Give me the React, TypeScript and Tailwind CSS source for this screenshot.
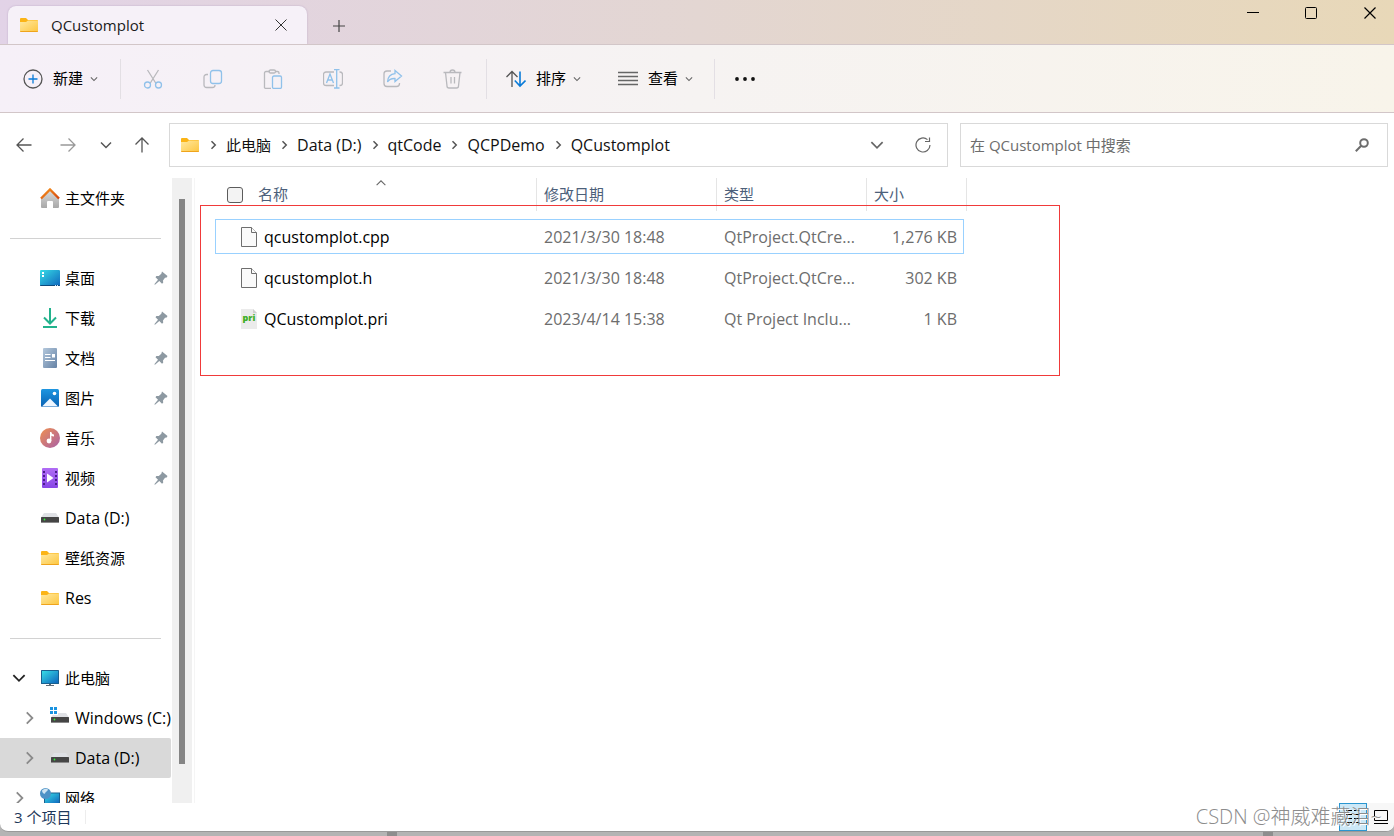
import { ReactNode } from "react";
import clsx from "clsx";

const UI_FONT = "font-['Open_Sans','Noto_Sans_CJK_SC',sans-serif]";

type Dir = "left" | "right" | "up" | "down";

const CHEVRON_PATHS: Record<Dir, string> = {
  left: "M10 3 5 8l5 5",
  right: "M6 3l5 5-5 5",
  up: "M3 10.5 8 5.5l5 5",
  down: "M3 5.5l5 5 5-5",
};

const Chevron = (props: { dir: Dir; className?: string; width?: number }) => (
  <svg
    viewBox="0 0 16 16"
    className={clsx("shrink-0", props.className)}
    fill="none"
    stroke="currentColor"
    strokeWidth={props.width || 1.5}>
    <path d={CHEVRON_PATHS[props.dir]} />
  </svg>
);

const Folder = () => (
  <svg viewBox="0 0 20 20" className="size-5 shrink-0">
    <defs>
      <linearGradient id="folder" x1="0" y1="0" x2="1" y2="1">
        <stop offset="0" stopColor="#ffe9a0" />
        <stop offset="1" stopColor="#fdc640" />
      </linearGradient>
    </defs>
    <path d="M1 4a1 1 0 0 1 1-1h5l2 2h9a1 1 0 0 1 1 1v3H1z" fill="#fbb416" />
    <path d="M1 7h6l2-1.5h10V16a1 1 0 0 1-1 1H2a1 1 0 0 1-1-1z" fill="url(#folder)" />
    <path d="M1 16h18a1 1 0 0 1-1 1H2a1 1 0 0 1-1-1z" fill="#efa41c" />
  </svg>
);

const Home = () => (
  <svg viewBox="0 0 20 20" className="size-5 shrink-0">
    <defs>
      <linearGradient id="home" x1="0" y1="0" x2="0" y2="1">
        <stop offset="0" stopColor="#dcdcdc" />
        <stop offset="1" stopColor="#a8a8a8" />
      </linearGradient>
      <linearGradient id="roof" x1="0" y1="0" x2="1" y2="1">
        <stop offset="0" stopColor="#f8961e" />
        <stop offset="1" stopColor="#d4430c" />
      </linearGradient>
    </defs>
    <path d="M10 2 1 10v9a1 1 0 0 0 1 1h5v-6a1 1 0 0 1 1-1h4a1 1 0 0 1 1 1v6h5a1 1 0 0 0 1-1v-9z" fill="url(#home)" />
    <path d="M1 10.5 10 1.5l9 9" fill="none" stroke="url(#roof)" strokeWidth="2.4" />
  </svg>
);

const Desktop = () => (
  <svg viewBox="0 0 20 20" className="size-5 shrink-0">
    <defs>
      <linearGradient id="screen" x1="0" y1="0" x2="1" y2="1">
        <stop offset="0" stopColor="#36dce6" />
        <stop offset="1" stopColor="#0f66bd" />
      </linearGradient>
    </defs>
    <rect x="0" y="2" width="20" height="16" rx="1" fill="url(#screen)" />
    <path d="M0 17h20a1 1 0 0 1-1 1H1a1 1 0 0 1-1-1z" fill="#0c4a7c" />
    <path d="M2 4h2v2H2zM2 7h2v2H2z" fill="#fff" />
    <path d="M15 17.5h1M17 17.5h1" stroke="#cfe6ff" strokeWidth="1" />
  </svg>
);

const Download = () => (
  <svg viewBox="0 0 20 20" className="size-5 shrink-0" fill="none" stroke="#22b28c" strokeWidth="2">
    <path d="M10 0v15M4 9.5l6 6 6-6M3 19h14" />
  </svg>
);

const Documents = () => (
  <svg viewBox="0 0 20 20" className="size-5 shrink-0">
    <defs>
      <linearGradient id="doc" x1="0" y1="0" x2="1" y2="1">
        <stop offset="0" stopColor="#b4c8dc" />
        <stop offset="1" stopColor="#6582a5" />
      </linearGradient>
    </defs>
    <rect x="3" y="0" width="14" height="20" rx="1" fill="url(#doc)" />
    <path d="M5 6.5h5.500M5 9.500h5.500M5 12.500h10" stroke="#fff" strokeWidth="1.2" />
    <path d="M12 6h3v3.500h-3z" fill="#fff" />
  </svg>
);

const Pictures = () => (
  <svg viewBox="0 0 20 20" className="size-5 shrink-0">
    <defs>
      <linearGradient id="pic" x1="0" y1="0" x2="0" y2="1">
        <stop offset="0" stopColor="#1e96e0" />
        <stop offset="1" stopColor="#0961b3" />
      </linearGradient>
    </defs>
    <rect x="1" y="1" width="18" height="18" rx="1.5" fill="url(#pic)" />
    <path d="M2 18.5 10 10.500l8 8z" fill="#eef6ff" />
    <circle cx="14.5" cy="5.5" r="1.8" fill="#fff" />
  </svg>
);

const Music = () => (
  <svg viewBox="0 0 20 20" className="size-5 shrink-0">
    <defs>
      <linearGradient id="music" x1="0" y1="0" x2="1" y2="1">
        <stop offset="0" stopColor="#f0904f" />
        <stop offset="1" stopColor="#a860a8" />
      </linearGradient>
    </defs>
    <circle cx="10" cy="10" r="10" fill="url(#music)" />
    <circle cx="9" cy="13" r="2.4" fill="#fff" />
    <path d="M10 4h1.400c.2 1.500 1 2.200 2.600 2.500v2c-1.200 0-2-.3-2.600-.8V13H10z" fill="#fff" />
  </svg>
);

const Videos = () => (
  <svg viewBox="0 0 20 20" className="size-5 shrink-0">
    <defs>
      <linearGradient id="video" x1="0" y1="0" x2="0" y2="1">
        <stop offset="0" stopColor="#b06cf5" />
        <stop offset="1" stopColor="#8746e6" />
      </linearGradient>
    </defs>
    <rect x="2" y="0" width="16" height="20" rx="1" fill="url(#video)" />
    <path
      d="M3 3h2v2H3zM3 7h2v2H3zM3 11h2v2H3zM3 15h2v2H3zM15 3h2v2h-2zM15 7h2v2h-2zM15 11h2v2h-2zM15 15h2v2h-2z"
      fill="#4b1d8c"
    />
    <path d="M7 5.5v9l6.500-4.500z" fill="#fff" />
  </svg>
);

const Drive = (props: { system?: boolean }) => (
  <svg viewBox="0 0 20 20" className="size-5 shrink-0 overflow-visible">
    <path d="M4 5h12l3 4.500H1z" fill="#dfe1e5" />
    <rect x="1" y="9" width="18" height="6" rx=".5" fill="#454545" />
    <path d="M1 14h18v1H1z" fill="#8a8a8a" />
    <circle cx="4.500" cy="11.500" r=".9" fill="#35f03c" />
    {props.system && (
      <>
        <path d="M0-1h8v8H0z" fill="#fff" />
        <path d="M0-1h3v3H0zM4-1h3v3H4zM0 3h3v3H0zM4 3h3v3H4z" fill="#1a93e0" />
      </>
    )}
  </svg>
);

const Computer = () => (
  <svg viewBox="0 0 20 20" className="size-5 shrink-0">
    <rect x="1" y="2" width="18" height="14" rx=".5" fill="#19608f" />
    <rect x="2" y="3" width="16" height="12" fill="url(#screen)" />
    <path d="M9 16h2v1.500H9zM6 17h8v1H6z" fill="#5e6a75" />
  </svg>
);

const Network = () => (
  <svg viewBox="0 0 20 20" className="size-5 shrink-0">
    <rect x="4" y="4.500" width="16" height="12" fill="#19608f" />
    <rect x="5" y="5.500" width="14" height="10" fill="url(#screen)" />
    <circle cx="5.500" cy="5.500" r="5.500" fill="#4d92c6" />
    <path d="M2 2.500c2-2 5-2 6-1-.5 2-2.500 2-3 4-1 1-3-1-3-3z" fill="#cfe4f2" />
  </svg>
);

const Pin = () => (
  <svg viewBox="0 0 14 14" className="size-3.5 shrink-0" fill="#8d99a2">
    <path d="M8 .5 13.500 5l-.8 1.500-1.700.3-2 2.700.2 2.200-1.200 1L5.300 10 1 13.800l-.7-.6L4 8.700 1.500 6.200l.9-1.200 2.400.1 2.500-2.300z" />
  </svg>
);

const Page = () => (
  <svg viewBox="0 0 16 20" className="h-5 w-4 shrink-0" fill="#fafafa" stroke="#6e6e6e">
    <path d="M.5.5h10l5 5v14H.5z" />
    <path d="M10.500.5v5h5" />
  </svg>
);

const PriPage = () => (
  <svg viewBox="0 0 16 20" className="h-5 w-4 shrink-0">
    <path d="M0 0h12l4 4v16H0z" fill="#ebebeb" />
    <path d="M12 0v4h4z" fill="#cfcfcf" />
    <text x="8" y="12" textAnchor="middle" fontSize="9" fontWeight="800" fontFamily="Open Sans, sans-serif" fill="#3cae22">
      pri
    </text>
  </svg>
);

// toolbar glyphs, drawn on a 20px grid
const TOOLS: { label: string; icon: ReactNode }[] = [
  {
    label: "剪切",
    icon: (
      <>
        <path d="M4.500 1 13 14.500M15.500 1 7 14.500" stroke="#b9b9bd" />
        <circle cx="4.500" cy="16" r="3" stroke="#90c1ea" />
        <circle cx="15.500" cy="16" r="3" stroke="#90c1ea" />
      </>
    ),
  },
  {
    label: "复制",
    icon: (
      <>
        <path d="M5 5.500H3.500a2.500 2.500 0 0 0-2.500 2.500v8A2.500 2.500 0 0 0 3.500 18.500h6a2.500 2.500 0 0 0 2.500-2.500" stroke="#b9b9bd" />
        <rect x="7.500" y="1.500" width="11" height="13" rx="2.500" stroke="#90c1ea" />
      </>
    ),
  },
  {
    label: "粘贴",
    icon: (
      <>
        <path d="M7 2.500H3A1.500 1.500 0 0 0 1.500 4v13.500A1.500 1.500 0 0 0 3 19.500h5M12 2.500h2.500A1.500 1.500 0 0 1 16 4v1" stroke="#b9b9bd" />
        <rect x="6" y="1" width="6.500" height="3" rx="1.500" stroke="#b9b9bd" />
        <rect x="9.500" y="7" width="9" height="12.500" rx="1.500" stroke="#90c1ea" />
      </>
    ),
  },
  {
    label: "重命名",
    icon: (
      <>
        <path d="M11 3H3a2.500 2.500 0 0 0-2.500 2.500v8.500A2.500 2.500 0 0 0 3 16.500h8M16.500 3H17a2.500 2.500 0 0 1 2.500 2.500v8.500a2.500 2.500 0 0 1-2.500 2.500h-.5" stroke="#b9b9bd" />
        <path d="m3.500 14 3.500-9 3.500 9M4.500 11h5M11 .5h5.500M11 19h5.500M13.700.5V19" stroke="#90c1ea" />
      </>
    ),
  },
  {
    label: "共享",
    icon: (
      <>
        <path d="M8 2H4a3 3 0 0 0-3 3v9.500a3 3 0 0 0 3 3h9.500a3 3 0 0 0 3-3V14" stroke="#b9b9bd" />
        <path d="M12 1.500 18.500 7 12 12.500V9.500C8.500 9.300 6 10.500 4.500 13 4.800 8.500 7.500 5 12 4.700z" stroke="#90c1ea" />
      </>
    ),
  },
  {
    label: "删除",
    icon: (
      <path
        d="M.5 3.500h18M7 3.500a2.500 2.500 0 0 1 5 0M2.500 3.500 4 17a2 2 0 0 0 2 2h7.500a2 2 0 0 0 2-2l1.500-13.500M8 8v6.500M11.500 8v6.500"
        stroke="#b9b9bd"
      />
    ),
  },
];

const TitleBar = () => (
  <header className="flex h-11 shrink-0 bg-linear-to-r from-[#e2d3e7] via-[#e3d6d2] to-[#e8d8b8]">
    <div className="ml-2 mt-1.5 flex w-[299px] items-center rounded-t-lg bg-[#f6f1f8] pl-[11px] pr-5 shadow-[0_0_2px_#bba8c4]">
      <Folder />
      <h1 className="ml-3 grow text-[15px] font-medium text-[#1b1b1b]">QCustomplot</h1>
      <button aria-label="关闭标签页">
        <svg viewBox="0 0 12 12" className="size-3" stroke="#333" fill="none">
          <path d="m.5.5 11 11M11.500.5l-11 11" />
        </svg>
      </button>
    </div>
    <button aria-label="新标签页" className="flex w-16 items-center justify-center pt-2">
      <svg viewBox="0 0 12 12" className="size-3" stroke="#444" strokeWidth="1.2" fill="none">
        <path d="M6 0v12M0 6h12" />
      </svg>
    </button>
    <div className="ml-auto flex h-[26px]">
      <button aria-label="最小化" className="flex w-[58px] items-center justify-center">
        <svg viewBox="0 0 12 12" className="size-3" stroke="#000" fill="none">
          <path d="M0 5.500h12" />
        </svg>
      </button>
      <button aria-label="最大化" className="flex w-[58px] items-center justify-center">
        <svg viewBox="0 0 12 12" className="size-3" stroke="#000" fill="none">
          <rect x=".5" y=".5" width="11" height="11" rx="1" />
        </svg>
      </button>
      <button aria-label="关闭" className="flex w-[54px] items-center justify-center pl-1.5">
        <svg viewBox="0 0 12 12" className="size-3" stroke="#000" strokeWidth="1.2" fill="none">
          <path d="m.5.5 11 11M11.500.5l-11 11" />
        </svg>
      </button>
    </div>
  </header>
);

const Separator = () => <span className="h-10 w-px bg-[#e3dfe4]" />;

const MenuButton = (props: { icon: ReactNode; text: string; className?: string }) => (
  <button className={clsx("flex items-center text-[15px] text-black", props.className)}>
    <svg viewBox="0 0 20 20" className="mr-2.5 size-5 shrink-0" fill="none" strokeWidth="1.3">
      {props.icon}
    </svg>
    {props.text}
    <Chevron dir="down" className="ml-1.5 size-2.5 text-[#666]" width={1.8} />
  </button>
);

const Toolbar = () => (
  <div className="flex h-[69px] shrink-0 items-center border-y border-[#d2c6c8] bg-linear-to-r from-[#f6f0f8] via-[#f6f3f2] to-[#f8f4ea]">
    <MenuButton
      className="w-[120px] pl-[23px]"
      text="新建"
      icon={
        <>
          <circle cx="10" cy="10" r="9" stroke="#555" />
          <path d="M10 5.500v9M5.500 10h9" stroke="#0a7bd8" />
        </>
      }
    />
    <Separator />
    <div className="flex pl-0.5 pr-[3px]">
      {TOOLS.map((tool) => (
        <button key={tool.label} aria-label={tool.label} disabled className="flex w-15 justify-center">
          <svg viewBox="0 0 20 20" className="size-5" fill="none" strokeWidth="1.3">
            {tool.icon}
          </svg>
        </button>
      ))}
    </div>
    <Separator />
    <MenuButton
      className="w-28 pl-[19px]"
      text="排序"
      icon={
        <>
          <path d="M6 18V2.500M.5 8 6 2.500 11.500 8" stroke="#555" />
          <path d="M14 2.500V17M8.800 11.500 14 17l5.500-5.500" stroke="#0a7bd8" strokeWidth="1.6" />
        </>
      }
    />
    <MenuButton
      className="w-[115px] pl-[19px]"
      text="查看"
      icon={<path d="M0 3.500h20M0 7.500h20M0 11.500h20M0 15.500h20" stroke="#666" />}
    />
    <Separator />
    <button aria-label="更多" className="flex w-[60px] justify-center">
      <svg viewBox="0 0 20 20" className="size-5" fill="#111">
        <circle cx="2" cy="10" r="1.9" />
        <circle cx="10" cy="10" r="1.9" />
        <circle cx="18" cy="10" r="1.9" />
      </svg>
    </button>
  </div>
);

const CRUMBS = ["此电脑", "Data (D:)", "qtCode", "QCPDemo", "QCustomplot"];

// latin labels are set one pixel larger than chinese ones
const textSize = (text: string) => (/^[\x20-\x7e]+$/.test(text) ? "text-base" : "text-[15px]");

const ARROWS = {
  back: "M15.500 8H1M7.500 1.500 1 8l6.500 6.500",
  forward: "M.5 8H15M8.500 1.500 15 8l-6.500 6.500",
  up: "M8 15.500V1M1.500 7.500 8 1l6.500 6.500",
};

const Arrow = (props: { d: string }) => (
  <svg viewBox="0 0 16 16" className="size-4" fill="none" stroke="currentColor" strokeWidth="1.3">
    <path d={props.d} />
  </svg>
);

const NavRow = () => (
  <div className="flex shrink-0 items-center pt-2.5 pb-[11px] pr-1.5">
    <button aria-label="后退" className="flex w-12 justify-center text-[#555]">
      <Arrow d={ARROWS.back} />
    </button>
    <button aria-label="前进" className="flex w-10 justify-center text-[#999]">
      <Arrow d={ARROWS.forward} />
    </button>
    <button aria-label="最近浏览的位置" className="flex w-9 justify-center text-[#555]">
      <Chevron dir="down" className="size-4" />
    </button>
    <button aria-label="上移" className="flex w-9 justify-center text-[#555]">
      <Arrow d={ARROWS.up} />
    </button>
    <nav className="ml-[9px] flex h-11 grow items-center border border-[#d9d9d9] pl-2.5">
      <Folder />
      {CRUMBS.map((crumb) => (
        <div key={crumb} className="flex items-center">
          <span className="flex w-[26px] justify-center text-[#555]">
            <Chevron dir="right" className="size-3" width={2} />
          </span>
          <a href="#" className={clsx("text-[#111]", textSize(crumb))}>
            {crumb}
          </a>
        </div>
      ))}
      <button aria-label="以前的位置" className="ml-auto flex w-11 justify-center text-[#666]">
        <Chevron dir="down" className="size-[18px]" />
      </button>
      <button aria-label="刷新" className="flex w-12 justify-center">
        <svg viewBox="0 0 16 16" className="size-4" fill="none" stroke="#666" strokeWidth="1.2">
          <path d="M15 8A7 7 0 1 1 12.500 2.600M10 4.500h4.500V.5" />
        </svg>
      </button>
    </nav>
    <label className="ml-3 flex h-11 w-[428px] items-center border border-[#d9d9d9] pl-[9px] pr-[18px]">
      <input
        type="search"
        aria-label="搜索"
        placeholder="在 QCustomplot 中搜索"
        className="w-0 grow text-[15px] outline-none placeholder:text-[#6d6d6d]"
      />
      <svg viewBox="0 0 14 14" className="size-3.5" fill="none" stroke="#6d6d6d" strokeWidth="2">
        <circle cx="9" cy="5" r="3.8" />
        <path d="M6.200 7.800.8 13.200" />
      </svg>
    </label>
  </div>
);

const QUICK: { icon: ReactNode; text: string; pinned?: boolean }[] = [
  { icon: <Desktop />, text: "桌面", pinned: true },
  { icon: <Download />, text: "下载", pinned: true },
  { icon: <Documents />, text: "文档", pinned: true },
  { icon: <Pictures />, text: "图片", pinned: true },
  { icon: <Music />, text: "音乐", pinned: true },
  { icon: <Videos />, text: "视频", pinned: true },
  { icon: <Drive />, text: "Data (D:)" },
  { icon: <Folder />, text: "壁纸资源" },
  { icon: <Folder />, text: "Res" },
];

const SideItem = (props: {
  icon: ReactNode;
  text: string;
  pinned?: boolean;
  expand?: Dir;
  nested?: boolean;
  active?: boolean;
}) => (
  <a
    href="#"
    className={clsx(
      "flex h-10 shrink-0 items-center whitespace-nowrap text-black",
      textSize(props.text),
      props.nested ? "pl-5" : "pl-2.5",
      props.active && "rounded-r-xs bg-[#d9d9d9]",
    )}>
    <span className={clsx("flex w-[30px] shrink-0", props.expand === "down" ? "text-[#222]" : "text-[#8a8a8a]")}>
      {props.expand && <Chevron dir={props.expand} className="size-[18px]" width={1.6} />}
    </span>
    {props.icon}
    <span className="ml-[5px] grow">{props.text}</span>
    {props.pinned && (
      <span className="pr-[3px]">
        <Pin />
      </span>
    )}
  </a>
);

const Divider = () => (
  <div className="flex h-10 shrink-0 items-center px-2.5">
    <hr className="grow border-[#d2d2d2]" />
  </div>
);

const Sidebar = () => (
  <aside className="flex w-48 shrink-0">
    <nav className="flex w-[171px] flex-col overflow-hidden">
      <SideItem icon={<Home />} text="主文件夹" />
      <Divider />
      {QUICK.map((val) => (
        <SideItem key={val.text} {...val} />
      ))}
      <Divider />
      <SideItem icon={<Computer />} text="此电脑" expand="down" />
      <SideItem icon={<Drive system />} text="Windows (C:)" expand="right" nested />
      <SideItem icon={<Drive />} text="Data (D:)" expand="right" nested active />
      <SideItem icon={<Network />} text="网络" expand="right" />
    </nav>
    <div className="ml-px flex w-5 justify-center bg-[#f0f0f0] pb-[39px] pt-[21px]">
      <div className="w-1.5 bg-[#858585]" />
    </div>
  </aside>
);

const FILES = [
  { icon: <Page />, name: "qcustomplot.cpp", date: "2021/3/30 18:48", type: "QtProject.QtCre...", size: "1,276 KB" },
  { icon: <Page />, name: "qcustomplot.h", date: "2021/3/30 18:48", type: "QtProject.QtCre...", size: "302 KB" },
  { icon: <PriPage />, name: "QCustomplot.pri", date: "2023/4/14 15:38", type: "Qt Project Inclu...", size: "1 KB" },
];

const HeaderCell = (props: { children: ReactNode }) => (
  <th className="p-0 pb-[5px] font-normal">
    <div className="flex h-[33px] items-center border-r border-[#e5e5e5] pl-[7px]">{props.children}</div>
  </th>
);

const FileList = () => (
  <main className="relative ml-0.5 grow border-l border-[#f5f5f5] pl-[17px]">
    <table className="w-[755px] table-fixed">
      <colgroup>
        <col className="w-[325px]" />
        <col className="w-[180px]" />
        <col className="w-[150px]" />
        <col className="w-[100px]" />
      </colgroup>
      <thead className="text-left text-[15px] text-[#4c607a]">
        <tr>
          <HeaderCell>
            <input
              type="checkbox"
              aria-label="全选"
              className="ml-2 size-4 appearance-none rounded-[3px] border border-[#5c5c5c] bg-[#f3f3f3]"
            />
            <span className="ml-[15px]">名称</span>
            <Chevron dir="up" className="mb-6 ml-[86px] size-3.5 text-[#666]" width={1.2} />
          </HeaderCell>
          <HeaderCell>修改日期</HeaderCell>
          <HeaderCell>类型</HeaderCell>
          <HeaderCell>大小</HeaderCell>
        </tr>
      </thead>
      <tbody className="text-base text-[#6d6d6d]">
        {FILES.map((file, i) => (
          <tr
            key={file.name}
            className={clsx("h-[41px]", i === 0 && "rounded-xs outline -outline-offset-4 outline-[#99d1ff]")}>
            <td className="p-0 pl-[29px]">
              <a href="#" className="flex items-center gap-[7px] text-black">
                {file.icon}
                {file.name}
              </a>
            </td>
            <td className="p-0 pl-[7px]">{file.date}</td>
            <td className="whitespace-nowrap p-0 pl-[7px]">{file.type}</td>
            <td className="p-0 pr-2.5 text-right">{file.size}</td>
          </tr>
        ))}
      </tbody>
    </table>
    <div className="pointer-events-none absolute left-[5px] top-[27px] h-[171px] w-[860px] border border-[#f03a3a]" />
  </main>
);

const StatusBar = () => (
  <footer className="relative flex h-7 shrink-0 text-[15px] text-[#1e395b]">
    <div className="flex items-center pl-3.5">
      3 个项目
      <span className="ml-3.5 h-3.5 w-px bg-[#ededed]" />
    </div>
    <button aria-label="详细信息" className="ml-auto flex w-7 items-center justify-center border border-[#2a96d0] bg-[#cce8f7]">
      <svg viewBox="0 0 14 14" className="size-3.5" stroke="#000" fill="none">
        <path d="M0 .5h6M8 .5h6M0 4.500h6M8 4.500h6M0 8.500h6M8 8.500h6M0 12.500h6M8 12.500h6" />
      </svg>
    </button>
    <button aria-label="大缩略图" className="flex w-[27px] items-center justify-center bg-[#f7f7f7]">
      <svg viewBox="0 0 14 14" className="size-3.5" stroke="#000" fill="none">
        <path d="M.5.5h13v10H.5zM0 13.500h14" />
      </svg>
    </button>
    <span className="absolute bottom-0 right-3 whitespace-nowrap text-xl leading-7 font-light text-[#8c8c8c] [text-shadow:1px_1px_0_#fff]">
      CSDN @神威难藏泪~
    </span>
  </footer>
);

export default function App() {
  return (
    <div className={clsx("flex h-screen flex-col bg-[#b4b4b4]", UI_FONT)}>
      <div className="flex min-h-0 grow flex-col overflow-hidden rounded-b-lg border-b border-[#999] bg-white">
        <TitleBar />
        <Toolbar />
        <NavRow />
        <div className="flex min-h-0 grow">
          <Sidebar />
          <FileList />
        </div>
        <StatusBar />
      </div>
      <div className="flex h-1 shrink-0 justify-between pl-[387px] pr-[121px]">
        <span className="w-2.5 bg-[#8e8e8e]" />
        <span className="w-2.5 bg-[#8e8e8e]" />
      </div>
    </div>
  );
}
